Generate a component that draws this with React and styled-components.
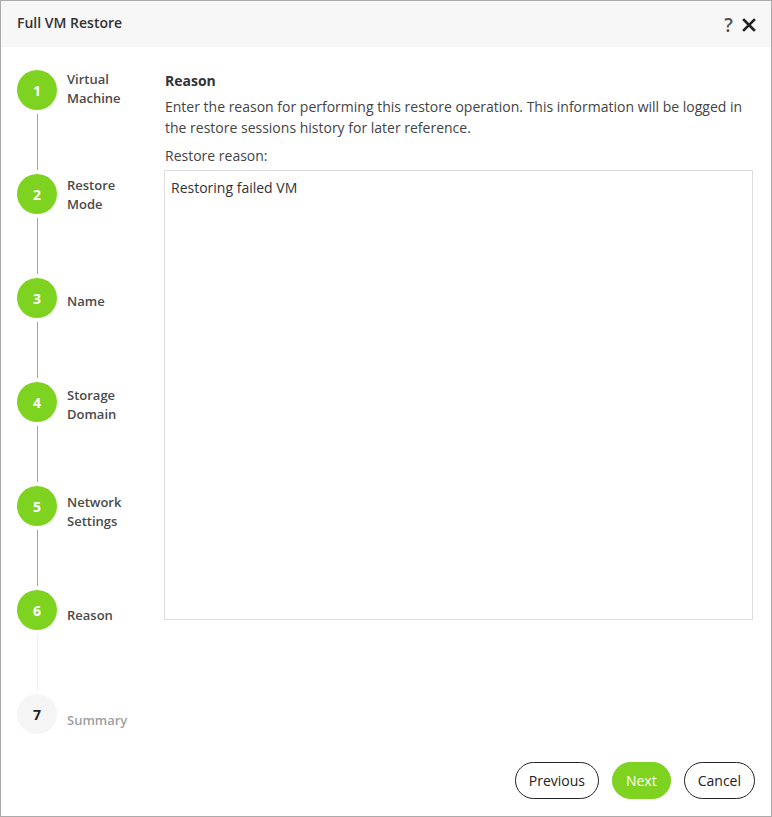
import React, { useState } from "react";
import styled, { createGlobalStyle } from "styled-components";

const GlobalStyle = createGlobalStyle`
  html, body {
    margin: 0;
    padding: 0;
    background: #ffffff;
  }
  * {
    box-sizing: border-box;
  }
`;

const Dialog = styled.div`
  font-family: "Open Sans", "Noto Sans", sans-serif;
  width: 772px;
  height: 817px;
  border: 1px solid #aaaaaa;
  display: flex;
  flex-direction: column;
  background: #fff;
  color: #333;
`;

const Header = styled.div`
  height: 46px;
  background: #f7f7f7;
  display: flex;
  align-items: center;
  justify-content: space-between;
  padding: 0 15px 0 16px;
`;

const Title = styled.div`
  font-size: 14px;
  font-weight: 600;
  color: #333;
  margin-top: -4px;
`;

const HeaderTools = styled.div`
  display: flex;
  align-items: center;
  gap: 9px;
  margin-top: 2px;
`;

const HelpButton = styled.span`
  font-size: 19px;
  font-weight: 600;
  color: #555;
  line-height: 1;
`;

const CloseIcon = () => (
  <svg width="14" height="14" viewBox="0 0 14 14">
    <path d="M2 2 L12 12 M12 2 L2 12" stroke="#222" strokeWidth="2.6" strokeLinecap="square" />
  </svg>
);

const Body = styled.div`
  flex: 1;
  display: flex;
`;

const Sidebar = styled.div`
  width: 163px;
  padding: 23px 0 0 16px;
  display: flex;
  flex-direction: column;
`;

const Step = styled.div`
  display: flex;
  align-items: center;
  height: 40px;
`;

const Circle = styled.div`
  width: 40px;
  height: 40px;
  border-radius: 50%;
  flex-shrink: 0;
  display: flex;
  align-items: center;
  justify-content: center;
  font-size: 14px;
  font-weight: 700;
  background: ${(p) => (p.$done ? "#7ed321" : "#f5f5f5")};
  color: ${(p) => (p.$done ? "#ffffff" : "#222")};
`;

const StepLabel = styled.div`
  margin-left: 10px;
  font-size: 13px;
  font-weight: 600;
  line-height: 19px;
  color: ${(p) => (p.$done ? "#4a4a4a" : "#a0a0a0")};
  margin-top: ${(p) => p.$offset}px;
`;

const Connector = styled.div`
  width: 1px;
  height: 56px;
  margin: 4px 0 4px 20px;
  background: ${(p) => (p.$done ? "#7ed321" : "#ececec")};
`;

const Content = styled.div`
  flex: 1;
  padding: 24px 18px 0 0;
  display: flex;
  flex-direction: column;
`;

const SectionTitle = styled.div`
  font-size: 14px;
  font-weight: 700;
  color: #333;
  line-height: 19px;
  padding-left: 1px;
`;

const Description = styled.p`
  margin: 6px 0 0;
  font-size: 14px;
  line-height: 21px;
  color: #444;
  padding-left: 1px;
`;

const FieldLabel = styled.div`
  margin-top: 8px;
  font-size: 14px;
  line-height: 19px;
  color: #444;
  padding-left: 1px;
`;

const ReasonBox = styled.textarea`
  margin-top: 5px;
  width: 100%;
  height: 450px;
  border: 1px solid #dddddd;
  padding: 7px 6px;
  font-family: "Open Sans", "Noto Sans", sans-serif;
  font-size: 14px;
  line-height: 20px;
  color: #333;
  resize: none;
  outline: none;
`;

const Footer = styled.div`
  display: flex;
  justify-content: flex-end;
  gap: 13px;
  padding: 0 16px 17px 0;
`;

const Button = styled.button`
  font-family: "Open Sans", "Noto Sans", sans-serif;
  font-size: 14px;
  height: 37px;
  padding: 0 13px;
  border-radius: 19px;
  cursor: pointer;
  border: ${(p) => (p.$primary ? "1px solid #7ed321" : "1px solid #222")};
  background: ${(p) => (p.$primary ? "#7ed321" : "#fff")};
  color: ${(p) => (p.$primary ? "#fff" : "#222")};
`;

const steps = [
  { label: ["Virtual", "Machine"], offset: -2 },
  { label: ["Restore", "Mode"], offset: 2 },
  { label: ["Name"], offset: 6 },
  { label: ["Storage", "Domain"], offset: 6 },
  { label: ["Network", "Settings"], offset: 11 },
  { label: ["Reason"], offset: 10 },
  { label: ["Summary"], offset: 13 },
];

export default function App() {
  const [reason, setReason] = useState("Restoring failed VM");
  const current = 6;

  return (
    <>
      <GlobalStyle />
      <Dialog>
        <Header>
          <Title>Full VM Restore</Title>
          <HeaderTools>
            <HelpButton>?</HelpButton>
            <CloseIcon />
          </HeaderTools>
        </Header>
        <Body>
          <Sidebar>
            {steps.map((step, i) => {
              const n = i + 1;
              const done = n <= current;
              return (
                <React.Fragment key={n}>
                  <Step>
                    <Circle $done={done}>{n}</Circle>
                    <StepLabel $done={done} $offset={step.offset}>
                      {step.label.map((l) => (
                        <div key={l}>{l}</div>
                      ))}
                    </StepLabel>
                  </Step>
                  {n < steps.length && <Connector $done={n < current} />}
                </React.Fragment>
              );
            })}
          </Sidebar>
          <Content>
            <SectionTitle>Reason</SectionTitle>
            <Description>
              Enter the reason for performing this restore operation. This information will be logged in
              the restore sessions history for later reference.
            </Description>
            <FieldLabel>Restore reason:</FieldLabel>
            <ReasonBox value={reason} onChange={(e) => setReason(e.target.value)} />
          </Content>
        </Body>
        <Footer>
          <Button>Previous</Button>
          <Button $primary>Next</Button>
          <Button>Cancel</Button>
        </Footer>
      </Dialog>
    </>
  );
}
